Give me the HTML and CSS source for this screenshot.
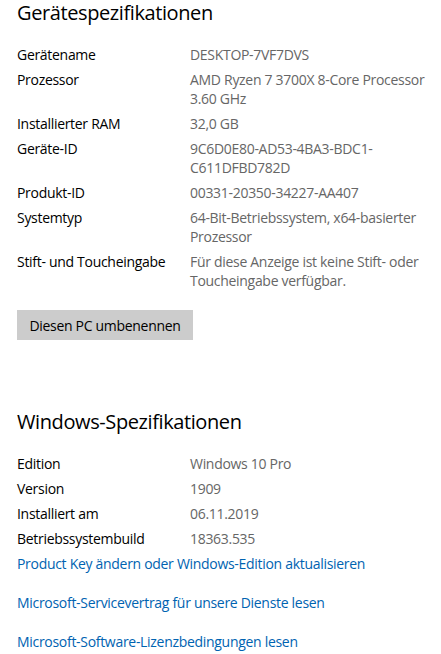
FILE: index.html
```html
<!DOCTYPE html>
<html lang="de">
<head>
<meta charset="utf-8">
<title>Info</title>
<link rel="stylesheet" href="styles.css">
</head>
<body>
<main class="page">
  <section class="specs">
    <h1 class="title">Gerätespezifikationen</h1>
    <dl class="rows">
      <div class="row"><dt>Gerätename</dt><dd>DESKTOP-7VF7DVS</dd></div>
      <div class="row"><dt>Prozessor</dt><dd>AMD Ryzen 7 3700X 8-Core Processor 3.60 GHz</dd></div>
      <div class="row"><dt>Installierter RAM</dt><dd>32,0 GB</dd></div>
      <div class="row"><dt>Geräte-ID</dt><dd>9C6D0E80-AD53-4BA3-BDC1-C611DFBD782D</dd></div>
      <div class="row"><dt>Produkt-ID</dt><dd>00331-20350-34227-AA407</dd></div>
      <div class="row"><dt>Systemtyp</dt><dd>64-Bit-Betriebssystem, x64-basierter Prozessor</dd></div>
      <div class="row"><dt>Stift- und Toucheingabe</dt><dd>Für diese Anzeige ist keine Stift- oder Toucheingabe verfügbar.</dd></div>
    </dl>
    <button class="btn" type="button">Diesen PC umbenennen</button>
  </section>
  <section class="specs win">
    <h1 class="title">Windows-Spezifikationen</h1>
    <dl class="rows">
      <div class="row"><dt>Edition</dt><dd>Windows 10 Pro</dd></div>
      <div class="row"><dt>Version</dt><dd>1909</dd></div>
      <div class="row"><dt>Installiert am</dt><dd>06.11.2019</dd></div>
      <div class="row"><dt>Betriebssystembuild</dt><dd>18363.535</dd></div>
    </dl>
    <nav class="links">
      <a href="#">Product Key ändern oder Windows-Edition aktualisieren</a>
      <a href="#">Microsoft-Servicevertrag für unsere Dienste lesen</a>
      <a href="#">Microsoft-Software-Lizenzbedingungen lesen</a>
    </nav>
  </section>
</main>
</body>
</html>
```
FILE: styles.css
```css
* { box-sizing: border-box; }
html, body { margin: 0; padding: 0; background: #fff; }
body {
  font-family: "Open Sans", "Noto Sans", "Liberation Sans", sans-serif;
  font-size: 14px;
  letter-spacing: -0.3px;
  color: #000;
}
.page { padding: 0 0 0 17px; width: 441px; overflow: hidden; }
.title {
  margin: 0;
  font-size: 20px;
  font-weight: 400;
  line-height: 26px;
  letter-spacing: -0.4px;
  color: #000;
}
.rows { margin: 19px 0 0; padding: 0; display: flex; flex-direction: column; gap: 6px; }
.row { display: grid; grid-template-columns: 173px 240px; line-height: 19px; }
dt { margin: 0; color: #000; }
dd { margin: 0; color: #666; }
.btn {
  margin-top: 20px;
  width: 176px;
  height: 30px;
  border: 0;
  background: #ccc;
  font: inherit;
  letter-spacing: inherit;
  color: #000;
  padding: 0;
}
.win { margin-top: 69px; }
.links { display: flex; flex-direction: column; gap: 20px; margin-top: 6px; }
.links a { color: #0063b1; text-decoration: none; line-height: 19px; }
```
